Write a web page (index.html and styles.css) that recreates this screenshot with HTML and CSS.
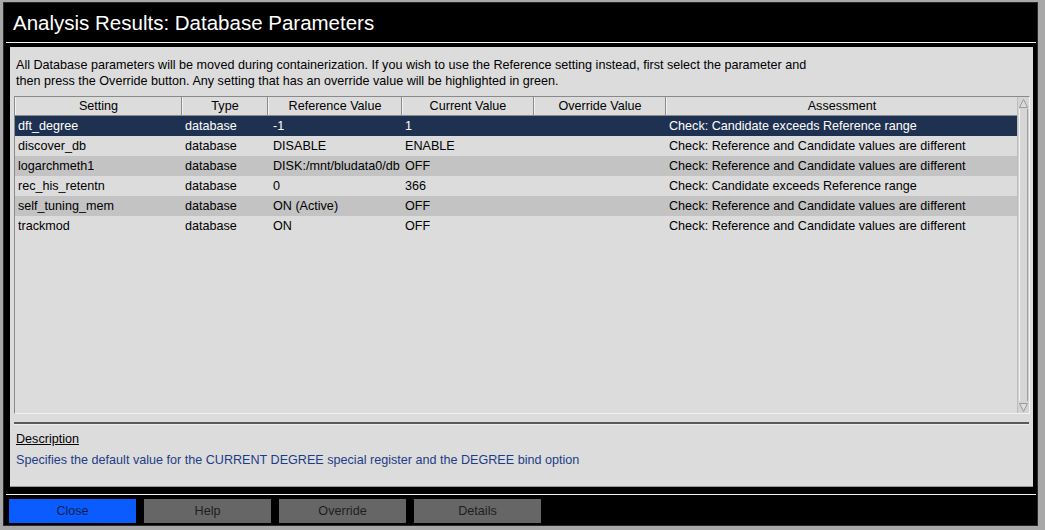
FILE: index.html
```html
<!DOCTYPE html>
<html>
<head>
<meta charset="utf-8">
<link rel="stylesheet" href="styles.css">
</head>
<body>
<div class="window">
  <div class="titlebar">Analysis Results: Database Parameters</div>
  <div class="rule"></div>
  <div class="panel">
    <p class="intro">All Database parameters will be moved during containerization. If you wish to use the Reference setting instead, first select the parameter and<br>then press the Override button. Any setting that has an override value will be highlighted in green.</p>
    <div class="tablebox">
      <div class="table">
        <div class="row head">
          <div class="c">Setting</div>
          <div class="c">Type</div>
          <div class="c">Reference Value</div>
          <div class="c">Current Value</div>
          <div class="c">Override Value</div>
          <div class="c">Assessment</div>
        </div>
        <div class="row sel">
          <div class="c">dft_degree</div><div class="c">database</div><div class="c ref">-1</div><div class="c">1</div><div class="c"></div><div class="c">Check: Candidate exceeds Reference range</div>
        </div>
        <div class="row">
          <div class="c">discover_db</div><div class="c">database</div><div class="c ref">DISABLE</div><div class="c">ENABLE</div><div class="c"></div><div class="c">Check: Reference and Candidate values are different</div>
        </div>
        <div class="row alt">
          <div class="c">logarchmeth1</div><div class="c">database</div><div class="c ref">DISK:/mnt/bludata0/db</div><div class="c">OFF</div><div class="c"></div><div class="c">Check: Reference and Candidate values are different</div>
        </div>
        <div class="row">
          <div class="c">rec_his_retentn</div><div class="c">database</div><div class="c ref">0</div><div class="c">366</div><div class="c"></div><div class="c">Check: Candidate exceeds Reference range</div>
        </div>
        <div class="row alt">
          <div class="c">self_tuning_mem</div><div class="c">database</div><div class="c ref">ON (Active)</div><div class="c">OFF</div><div class="c"></div><div class="c">Check: Reference and Candidate values are different</div>
        </div>
        <div class="row">
          <div class="c">trackmod</div><div class="c">database</div><div class="c ref">ON</div><div class="c">OFF</div><div class="c"></div><div class="c">Check: Reference and Candidate values are different</div>
        </div>
      </div>
      <div class="scrollbar">
        <div class="arrow up"><svg width="11" height="11" viewBox="0 0 11 11"><path d="M1.5 9.5 L5.5 1.5 L9.5 9.5 Z" fill="#dcdcdc" stroke="#9a9a9a" stroke-width="1"/></svg></div>
        <div class="thumb"></div>
        <div class="arrow down"><svg width="11" height="11" viewBox="0 0 11 11"><path d="M1.5 1.5 L5.5 9.5 L9.5 1.5 Z" fill="#dcdcdc" stroke="#9a9a9a" stroke-width="1"/></svg></div>
      </div>
    </div>
    <div class="sep"></div>
    <div class="desc-label">Description</div>
    <div class="desc-text">Specifies the default value for the CURRENT DEGREE special register and the DEGREE bind option</div>
  </div>
  <div class="rule bottom"></div>
  <div class="buttons">
    <div class="btn primary">Close</div>
    <div class="btn">Help</div>
    <div class="btn">Override</div>
    <div class="btn">Details</div>
  </div>
</div>
</body>
</html>
```

FILE: styles.css
```css
html, body {
  margin: 0;
  padding: 0;
}
body {
  background: #a8a8a8;
  width: 1045px;
  height: 530px;
  overflow: hidden;
  font-family: "Liberation Sans", Arial, sans-serif;
  padding: 2px 7px 4px 3px;
  box-sizing: border-box;
}
.window {
  background: #000;
  width: 1035px;
  height: 524px;
  box-sizing: border-box;
  border: 1px solid #2a2a2a;
  display: flex;
  flex-direction: column;
  padding: 0 1px 0 1px;
}
.titlebar {
  height: 39px;
  color: #fff;
  font-size: 20.5px;
  line-height: 40px;
  padding-left: 8px;
  box-sizing: border-box;
}
.rule {
  height: 1px;
  background: #f4f4f4;
  margin: 0 0 0 1px;
}
.panel {
  margin: 4px 3px 0 5px;
  height: 440px;
  background: #dcdcdc;
  box-sizing: border-box;
  padding: 10px 0 0 0;
  display: flex;
  flex-direction: column;
  border-bottom: 1px solid #9a9a9a;
}
.intro {
  margin: 0;
  padding-left: 6px;
  font-size: 12.6px;
  line-height: 16px;
  color: #000;
}
.tablebox {
  margin: 7px 3px 0 4px;
  height: 318px;
  box-sizing: border-box;
  border: 1px solid #8a8a8a;
  border-right-color: #f2f2f2;
  border-bottom-color: #f2f2f2;
  display: flex;
  background: #dcdcdc;
}
.table {
  flex: 1;
  display: flex;
  flex-direction: column;
}
.row {
  display: grid;
  grid-template-columns: 167px 86px 134px 132px 132px 1fr;
  height: 20px;
  font-size: 12.6px;
  line-height: 20px;
  color: #000;
}
.row .c {
  padding-left: 3px;
  white-space: nowrap;
  overflow: hidden;
}
.row .c.ref {
  padding-left: 5px;
}
.row.head {
  height: 18px;
  line-height: 18px;
  border-bottom: 1px solid #8a8a8a;
}
.row.head .c {
  padding-left: 0;
  text-align: center;
  border-right: 1px solid #8a8a8a;
  border-left: 1px solid #f2f2f2;
  background: #dcdcdc;
}
.row.head .c:last-child {
  border-right: none;
}
.row.sel {
  background: #1f3150;
  color: #fff;
}
.row.alt {
  background: #c3c3c3;
}
.scrollbar {
  width: 11px;
  display: flex;
  flex-direction: column;
  background: #d0d0d0;
  border-left: 1px solid #bdbdbd;
}
.arrow {
  height: 12px;
  display: flex;
  align-items: center;
  justify-content: center;
  background: #d4d4d4;
}
.thumb {
  flex: 1;
  margin: 0 1px;
  background: #d6d6d6;
  border-left: 1px solid #f2f2f2;
  border-right: 1px solid #a0a0a0;
}
.sep {
  margin: 8px 4px 0 4px;
  height: 2px;
  background: #5a5a5a;
  border-bottom: 1px solid #eee;
}
.desc-label {
  margin: 6px 0 0 6px;
  font-size: 12.6px;
  line-height: 16px;
  text-decoration: underline;
  color: #000;
}
.desc-text {
  margin: 5px 0 0 6px;
  font-size: 12.6px;
  line-height: 16px;
  color: #1c3c86;
}
.rule.bottom {
  margin-top: 7px;
}
.buttons {
  display: flex;
  gap: 8px;
  padding: 4px 0 0 4px;
}
.btn {
  width: 127px;
  height: 24px;
  line-height: 24px;
  text-align: center;
  background: #666;
  color: #1e1e1e;
  font-size: 12.6px;
}
.btn.primary {
  background: #0a5cff;
  color: #12204a;
}
```
